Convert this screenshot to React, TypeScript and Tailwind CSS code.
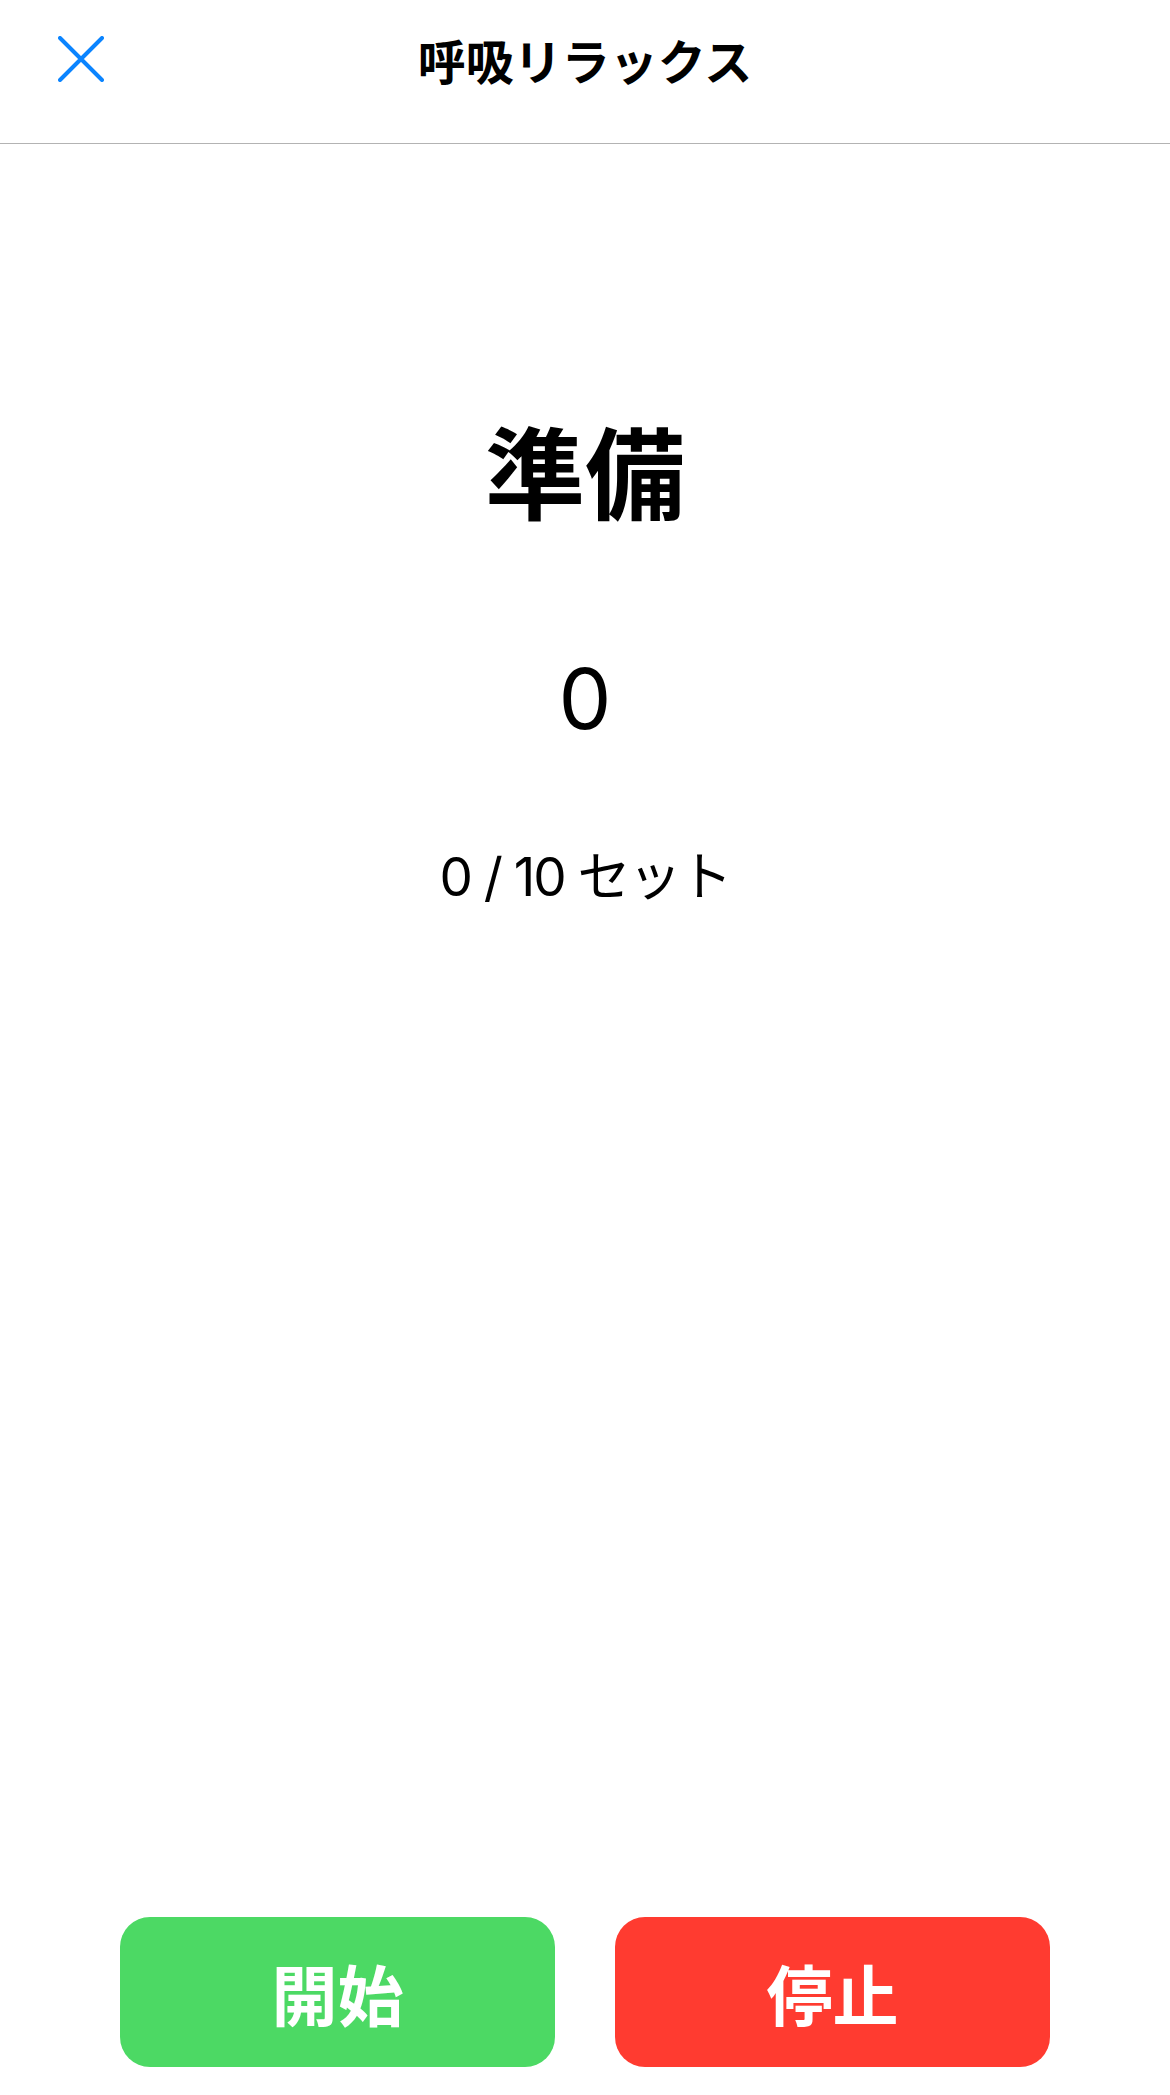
import React from 'react';

const jp = '[font-family:Inter,"Noto_Sans_CJK_JP",sans-serif]';

function CloseIcon() {
  return (
    <svg width="46" height="46" viewBox="0 0 46 46" fill="none">
      <path
        d="M2 2L44 44M44 2L2 44"
        stroke="#0A84FF"
        strokeWidth="4"
        strokeLinecap="round"
      />
    </svg>
  );
}

export default function App() {
  const [phase, setPhase] = React.useState('準備');
  const [count] = React.useState(0);
  const [sets] = React.useState(0);

  return (
    <div className={`min-h-[2095px] flex flex-col bg-white text-black ${jp}`}>
      {/* header */}
      <header className="h-[144px] grid grid-cols-[1fr_auto_1fr] items-center border-b border-[#b3b3b3]">
        <button className="justify-self-start ml-[58px] -mt-[26px] p-0" aria-label="閉じる">
          <CloseIcon />
        </button>
        <h1 className="text-[48px] font-bold leading-none -mt-[26px] font-['Noto_Sans_CJK_JP',sans-serif]">
          呼吸リラックス
        </h1>
        <div />
      </header>

      {/* status */}
      <main className="flex flex-col items-center pt-[275px]">
        <div className="text-[100px] font-bold leading-none font-['Noto_Sans_CJK_JP',sans-serif]">
          {phase}
        </div>
        <div className="mt-[138px] text-[84px] leading-none">{count}</div>
        <div className="mt-[110px] text-[53px] leading-none tracking-[-2px]">
          {sets} / 10 セット
        </div>
      </main>

      {/* controls */}
      <div className="mt-auto mb-[28px] px-[120px] grid grid-cols-2 gap-[60px]">
        <button
          onClick={() => setPhase('吸う')}
          className="h-[150px] rounded-[30px] bg-[#4CD964] text-white text-[66px] font-bold font-['Noto_Sans_CJK_JP',sans-serif]"
        >
          開始
        </button>
        <button
          onClick={() => setPhase('準備')}
          className="h-[150px] rounded-[30px] bg-[#FF3B30] text-white text-[66px] font-bold font-['Noto_Sans_CJK_JP',sans-serif]"
        >
          停止
        </button>
      </div>
    </div>
  );
}
